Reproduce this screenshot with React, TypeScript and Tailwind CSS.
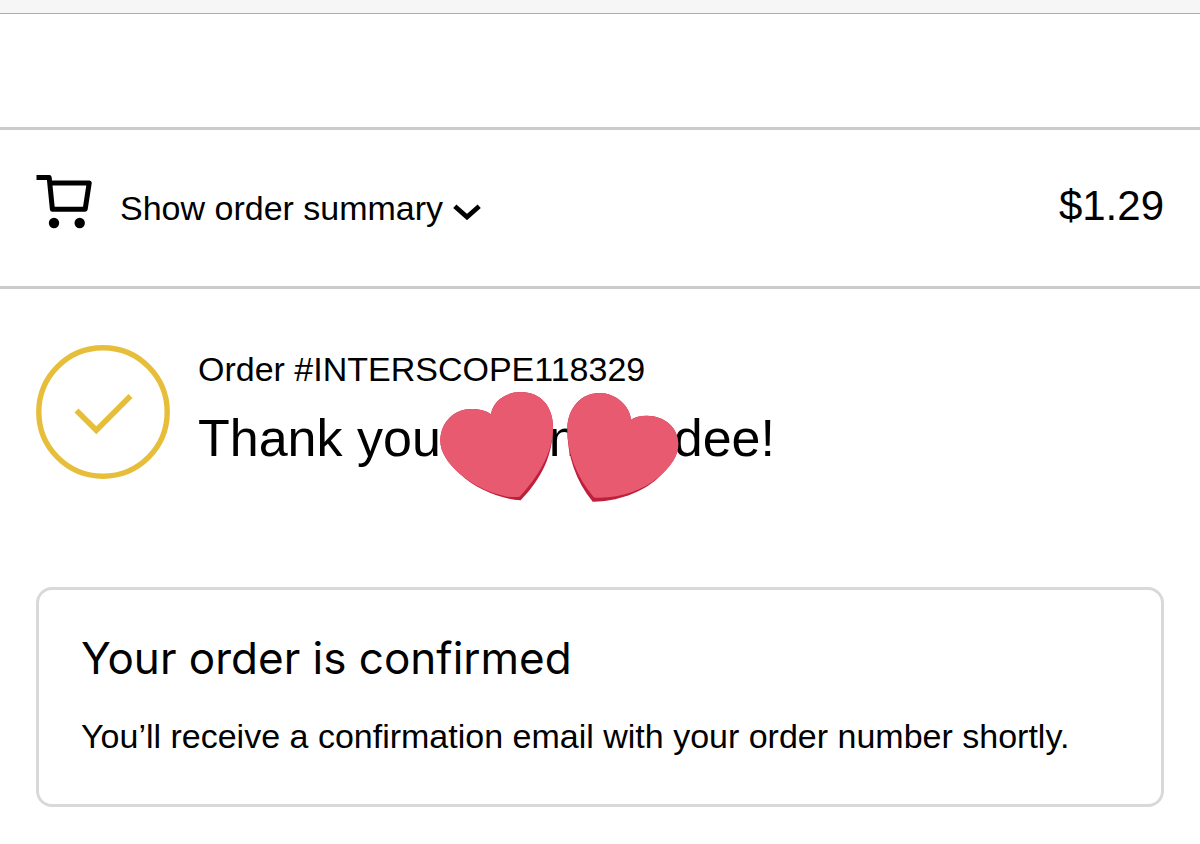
import React, { useState } from 'react';

const CartIcon: React.FC = () => (
  <svg className="w-14 h-14 shrink-0" viewBox="0 0 56 56" fill="none" aria-hidden="true">
    <path
      d="M.5 3.5H13.2L16.4 35.2H49.2L53.2 9H14"
      stroke="#000"
      strokeWidth="5"
      strokeLinejoin="round"
    />
    <circle cx="18" cy="49" r="5.2" fill="#000" />
    <circle cx="43.7" cy="49" r="5.2" fill="#000" />
  </svg>
);

const ChevronIcon: React.FC<{ open: boolean }> = ({ open }) => (
  <svg className={`w-7 h-4 mt-2 ${open ? 'rotate-180' : ''}`} viewBox="0 0 28 16" fill="none" aria-hidden="true">
    <path d="M1.8 2.3L14 13L26.2 2.3" stroke="#000" strokeWidth="4.8" />
  </svg>
);

const SuccessIcon: React.FC = () => (
  <svg className="w-[134px] h-[134px] shrink-0" viewBox="0 0 134 134" fill="none" aria-hidden="true">
    <circle cx="67" cy="67" r="64.2" stroke="#e6be3a" strokeWidth="5.4" />
    <path d="M40.5 65.5L60.3 85.3L94.5 51" stroke="#e6be3a" strokeWidth="5.6" />
  </svg>
);

// Pair of heart stickers laid over the customer name
const Hearts: React.FC = () => (
  <svg className="absolute left-[242px] -top-4 w-60 h-28" viewBox="0 0 240 112" aria-hidden="true">
    <path
      d="M51 24.3C53 11 66 2 81 2C101 2 114 17 113 40C112 66 102 88 80.7 110.3C60 109 36 99 20 84C8 73 0 62 .3 50C1 32 14 19 31.7 19C39 19 46 20.5 51 24.3Z"
      fill="#c01f3c"
    />
    <path
      d="M51 24.3C53 11 66 2 81 2C101 2 114 17 113 40C112 64 98 87 79.5 106.8C75 107.3 70 107 66 106.5C49 102.5 33 95.5 20 84C8 73 0 62 .3 50C1 32 14 19 31.7 19C39 19 46 20.5 51 24.3Z"
      fill="#e75a70"
    />
    <path
      d="M191 29.7C190 16 176 3 159.3 3C141 3 128 18 127.3 38C127 66 136 91 152.7 111.7C175 112 202 103 218 88C230 77 239 66 238.3 53C238 38 225 25.7 206.7 25.7C200 25.7 195 27 191 29.7Z"
      fill="#c01f3c"
    />
    <path
      d="M191 29.7C190 16 176 3 159.3 3C141 3 128 18 127.3 38C127 64 137 87 154 107.5C178 109 202 101 218 87.5C230 77 239 66 238.3 53C238 38 225 25.7 206.7 25.7C200 25.7 195 27 191 29.7Z"
      fill="#e75a70"
    />
  </svg>
);

export default function App() {
  const [open, setOpen] = useState(false);

  return (
    <div className="min-h-screen bg-white text-black font-['Liberation_Sans',sans-serif]">
      <div className="h-3.5 bg-[#f6f6f6] border-b border-[#adadad]" />

      <header className="h-[113px]" />

      <section className="flex items-start justify-between border-y-3 border-[#cbcbcb] px-9 pt-11 pb-14">
        <button
          type="button"
          aria-expanded={open}
          onClick={() => setOpen(!open)}
          className="flex items-start cursor-pointer"
        >
          <CartIcon />
          <span className="ml-7 mt-3.5 flex items-center gap-2.5 text-[34px] leading-10 whitespace-nowrap">
            Show order summary
            <ChevronIcon open={open} />
          </span>
        </button>
        <span className="mt-2 text-[42px] leading-12">$1.29</span>
      </section>

      <main className="px-9 pt-14 pb-9">
        <div className="flex items-start gap-7">
          <SuccessIcon />
          <div className="pt-1">
            <p className="text-[34px] leading-10">Order #INTERSCOPE118329</p>
            <h1 className="relative mt-[17px] flex text-[52px] leading-16 whitespace-nowrap">
              <span>Thank you</span>
              <span className="ml-27">n</span>
              <span className="ml-24">dee!</span>
              <Hearts />
            </h1>
          </div>
        </div>

        <section className="mt-[108px] rounded-2xl border-3 border-[#d9d9d9] px-[42px] pt-10 pb-12">
          <h2 className="font-['Inter',sans-serif] text-[44px] leading-14">Your order is confirmed</h2>
          <p className="mt-[30px] text-[34px] leading-10">
            You’ll receive a confirmation email with your order number shortly.
          </p>
        </section>
      </main>
    </div>
  );
}
